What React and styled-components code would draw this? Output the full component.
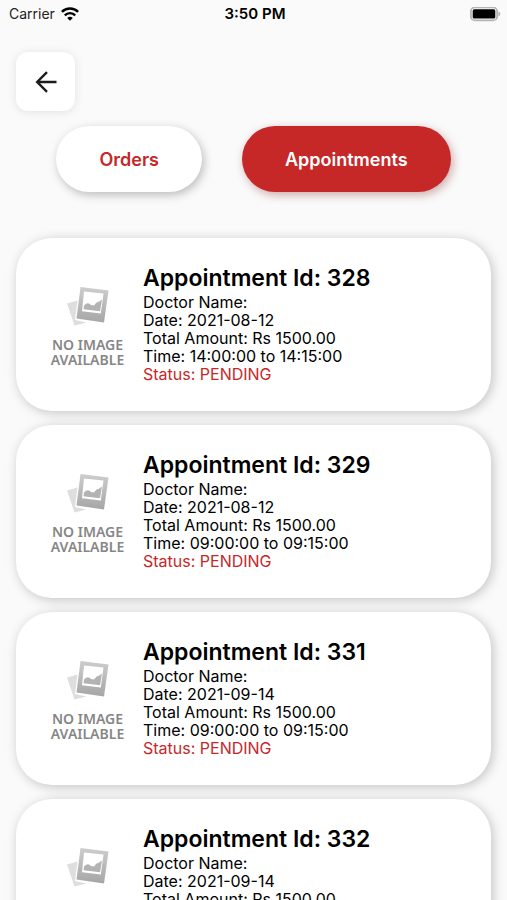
import React from "react";
import styled, { createGlobalStyle } from "styled-components";

const GlobalStyle = createGlobalStyle`
  * {
    box-sizing: border-box;
  }
  body {
    margin: 0;
    background: #fafafa;
    color: #000;
    font-family: Inter, "Liberation Sans", sans-serif;
  }
`;

const Screen = styled.div`
  height: 100vh;
  overflow-x: hidden;
  overflow-y: auto;
  scrollbar-width: none;
  background: #fafafa;
`;

const StatusBar = styled.header`
  display: grid;
  grid-template-columns: 1fr auto 1fr;
  align-items: center;
  height: 28px;
  padding: 0 6px 0 9px;
  font-size: 14px;
  line-height: 20px;
`;

const Carrier = styled.span`
  display: flex;
  align-items: center;
  gap: 6px;
  color: #222;
`;

const Clock = styled.time`
  font-size: 15px;
  font-weight: 600;
`;

const Battery = styled.svg`
  justify-self: end;
`;

const BackButton = styled.button`
  display: flex;
  align-items: center;
  justify-content: center;
  width: 59px;
  height: 59px;
  margin: 24px 16px 0;
  padding: 0;
  border: none;
  border-radius: 12px;
  background: #fff;
  box-shadow: 0 1px 10px rgba(0, 0, 0, 0.1);
`;

const Tabs = styled.nav`
  display: flex;
  justify-content: center;
  gap: 40px;
  margin-top: 15px;
`;

const TabButton = styled.button`
  height: 66px;
  padding: 0 43px;
  border: none;
  border-radius: 33px;
  background: ${({ $active }) => ($active ? "#c62828" : "#fff")};
  color: ${({ $active }) => ($active ? "#fff" : "#c62828")};
  font-family: inherit;
  font-size: 18px;
  font-weight: 600;
  box-shadow: 2px 3px 10px
    ${({ $active }) => ($active ? "rgba(120, 20, 20, 0.35)" : "rgba(0, 0, 0, 0.25)")};
`;

const List = styled.ul`
  display: flex;
  flex-direction: column;
  gap: 14px;
  margin: 46px 0 0;
  padding: 0 16px 16px;
  list-style: none;
`;

const Card = styled.li`
  display: flex;
  align-items: center;
  gap: 17px;
  height: 173px;
  padding: 0 24px 0 33px;
  border-radius: 36px;
  background: #fff;
  box-shadow: 2px 2px 12px rgba(0, 0, 0, 0.22);
`;

const Placeholder = styled.div`
  display: flex;
  flex-direction: column;
  align-items: center;
  flex: none;
  width: 77px;
  padding-top: 4px;
  color: #868686;
  font-family: "Noto Sans", sans-serif;
  font-size: 14px;
  font-weight: 600;
  line-height: 15px;
  text-align: center;
  white-space: nowrap;

  svg {
    margin-bottom: 11px;
  }
`;

const Details = styled.div`
  min-width: 0;
  padding-bottom: 2px;
  font-size: 16px;
  font-weight: 400;
  line-height: 18px;

  p {
    margin: 0;
  }
`;

const Title = styled.h2`
  margin: 0 0 1px;
  font-size: 23px;
  font-weight: 600;
  line-height: 28px;
`;

const Status = styled.p`
  color: #c62828;
`;

const appointments = [
  { id: 328, date: "2021-08-12", amount: "1500.00", from: "14:00:00", to: "14:15:00" },
  { id: 329, date: "2021-08-12", amount: "1500.00", from: "09:00:00", to: "09:15:00" },
  { id: 331, date: "2021-09-14", amount: "1500.00", from: "09:00:00", to: "09:15:00" },
  { id: 332, date: "2021-09-14", amount: "1500.00", from: "09:00:00", to: "09:15:00" },
];

function WifiIcon() {
  return (
    <svg width="18" height="14" viewBox="0 0 18 14" aria-hidden="true">
      <g fill="none" stroke="#000" strokeWidth="2.4">
        <path d="M0.9 4.8a11.5 11.5 0 0 1 16.2 0" />
        <path d="M3.8 8.3a7.2 7.2 0 0 1 10.4 0" />
      </g>
      <path d="M9 13.8 6.2 11a4 4 0 0 1 5.6 0z" />
    </svg>
  );
}

function BatteryIcon() {
  return (
    <Battery width="31" height="15" viewBox="0 0 31 15" aria-hidden="true">
      <rect x="0.9" y="0.4" width="26.2" height="13" rx="4" fill="#fafafa" stroke="#b4b4b4" strokeWidth="1.8" />
      <rect x="2.7" y="2.3" width="22.6" height="9.2" rx="1.6" />
      <path d="M28.4 4.6v4.8q2-.8 2-2.4T28.4 4.6z" fill="#b4b4b4" />
    </Battery>
  );
}

function ArrowIcon() {
  return (
    <svg width="24" height="24" viewBox="0 0 24 24" aria-hidden="true">
      <path
        d="M22.500 12H3M13 2.200 3.200 12l9.800 9.800"
        fill="none"
        stroke="#1c1c1c"
        strokeWidth="2.4"
      />
    </svg>
  );
}

function PhotosIcon() {
  return (
    <svg width="42" height="40" viewBox="0 0 42 40" aria-hidden="true">
      <defs>
        <linearGradient id="frame" x1="0" y1="0" x2="0" y2="1">
          <stop offset="0" stopColor="#cdcdcd" />
          <stop offset="1" stopColor="#a6a6a6" />
        </linearGradient>
      </defs>
      <path d="M0 17.5 10.5 14.5 8 34l11.5 2.5L7.5 39.5z" fill="#dedede" />
      <path d="M13.5 1 41.5 4.5 37 36.5 9.5 32.5z" fill="url(#frame)" />
      <path d="M17 5.5 36.5 7.5 33.8 27.5 15 25.2z" fill="#fff" />
      <path d="M16.5 23.2 17 19.5q4-4 7-.5l3 .5 2.5-3 2-.5L35 13.5 33 25.3z" fill="#b3b3b3" />
    </svg>
  );
}

function AppointmentCard({ item }) {
  return (
    <Card>
      <Placeholder>
        <PhotosIcon />
        <span>NO IMAGE</span>
        <span>AVAILABLE</span>
      </Placeholder>
      <Details>
        <Title>Appointment Id: {item.id}</Title>
        <p>Doctor Name:</p>
        <p>Date: {item.date}</p>
        <p>Total Amount: Rs {item.amount}</p>
        <p>
          Time: {item.from} to {item.to}
        </p>
        <Status>Status: PENDING</Status>
      </Details>
    </Card>
  );
}

export default function App() {
  return (
    <>
      <GlobalStyle />
      <Screen>
        <StatusBar>
          <Carrier>
            Carrier
            <WifiIcon />
          </Carrier>
          <Clock>3:50 PM</Clock>
          <BatteryIcon />
        </StatusBar>
        <main>
          <BackButton type="button" aria-label="Back">
            <ArrowIcon />
          </BackButton>
          <Tabs>
            <TabButton type="button">Orders</TabButton>
            <TabButton type="button" $active>
              Appointments
            </TabButton>
          </Tabs>
          <List>
            {appointments.map((item) => (
              <AppointmentCard key={item.id} item={item} />
            ))}
          </List>
        </main>
      </Screen>
    </>
  );
}
